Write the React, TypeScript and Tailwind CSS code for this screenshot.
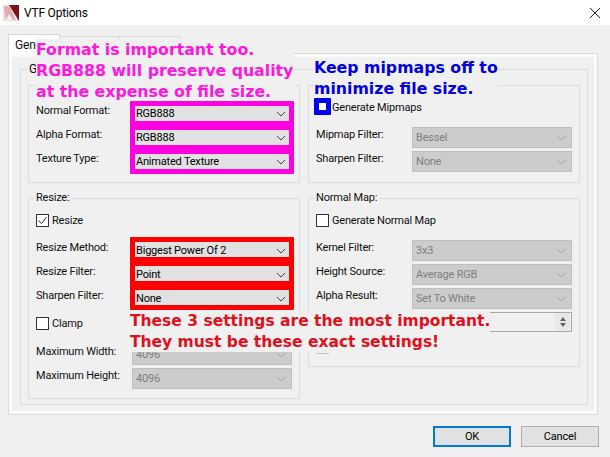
import type { ReactNode } from "react";

const ui = "[font-family:'Roboto','Noto_Sans',sans-serif]";
const note = "[font-family:'DejaVu_Sans',sans-serif] font-bold leading-[21px] bg-[#f0f0f0]";

function Chevron({ off }: { off?: boolean }) {
  return (
    <svg viewBox="0 0 10 6" className="h-[6px] w-[10px]" fill="none">
      <path d="M1 1l4 4 4-4" stroke={off ? "#a3a3a3" : "#444"} strokeWidth="1" />
    </svg>
  );
}

function Select({ value, off }: { value: string; off?: boolean }) {
  return (
    <div
      className={
        "flex h-[21px] w-[160px] shrink-0 items-center justify-between pl-[3px] pr-[5px] border " +
        (off ? "bg-[#cccccc] border-[#bfbfbf] text-[#808080]" : "bg-[#e1e1e1] border-[#adadad] text-black")
      }
    >
      <span className="pt-px">{value}</span>
      <Chevron off={off} />
    </div>
  );
}

function Row({ label, value, off }: { label: string; value: string; off?: boolean }) {
  return (
    <div className="flex h-[21px] items-center justify-between pl-[7px] pr-[7px]">
      <span className="-mt-[5px] whitespace-nowrap">{label}</span>
      <Select value={value} off={off} />
    </div>
  );
}

function Check({ label, checked }: { label: string; checked?: boolean }) {
  return (
    <div className="flex h-[13px] items-center gap-[3px] pl-[7px]">
      <span className="flex h-[13px] w-[13px] items-center justify-center border border-[#333333] bg-white">
        {checked && (
          <svg viewBox="0 0 11 11" className="h-[11px] w-[11px]" fill="none">
            <path d="M1.5 5.5l3 3 5-6.5" stroke="#333" strokeWidth="1" />
          </svg>
        )}
      </span>
      <span className="whitespace-nowrap pt-px">{label}</span>
    </div>
  );
}

function Group({ title, className, children }: { title: string; className?: string; children: ReactNode }) {
  return (
    <div className={"relative w-[272px] border border-[#dcdcdc] " + (className ?? "")}>
      {title && <span className="absolute -top-[9px] left-[5px] bg-[#f0f0f0] px-[2px] leading-[16px]">{title}</span>}
      {children}
    </div>
  );
}

function AppIcon() {
  return (
    <svg viewBox="0 0 16 16" className="h-4 w-4">
      <rect width="16" height="16" fill="#e9dede" />
      <path d="M6 0h10v16L11 8z" fill="#7d1414" />
      <path d="M1 2l5-1 4 8 2 6H3z" fill="#e4a7b4" />
      <path d="M3 15l3-6 4 6z" fill="#f3f0f0" />
    </svg>
  );
}

export default function App() {
  return (
    <div className={"relative flex h-[457px] w-[610px] flex-col overflow-hidden bg-[#f0f0f0] text-[11px] tracking-[-0.2px] text-[#111111] " + ui}>
      {/* Title bar */}
      <div className="flex h-[25px] shrink-0 items-center bg-white pl-[3px] pr-[10px]">
        <AppIcon />
        <span className="ml-[5px] text-[12px] text-black">VTF Options</span>
        <svg viewBox="0 0 10 10" className="ml-auto h-[10px] w-[10px]" fill="none">
          <path d="M0 0l10 10M10 0L0 10" stroke="#222" strokeWidth="1" />
        </svg>
      </div>

      {/* Tabs */}
      <div className="relative z-10 ml-[8px] mt-[9px] flex h-[20px] items-end">
        <div className="h-[21px] w-[52px] self-start border border-b-0 border-[#d9d9d9] bg-white pl-[6px] pt-[2px] text-[12px] leading-[16px]">General</div>
        <div className="h-[18px] w-[60px] border border-l-0 border-b-0 border-[#d9d9d9]" />
        <div className="h-[18px] w-[61px] border border-l-0 border-b-0 border-[#d9d9d9]" />
      </div>

      {/* Tab page */}
      <div className="mx-[8px] h-[362px] w-[590px] -mt-px border border-[#d9d9d9] bg-[#f0f0f0] shadow-[inset_0_0_0_3px_#fbfbfb]">
        <div className="relative mx-[11px] mt-[15px] h-[336px] w-[568px] border border-[#dcdcdc] px-[7px] pt-[15px]">
          <span className="absolute -top-[9px] left-[6px] bg-[#f0f0f0] px-[2px] text-[12px] leading-[16px]">General</span>
          <div className="grid grid-cols-[272px_272px] gap-x-[8px]">
            <div className="flex flex-col gap-[15px]">
              <Group title="" className="h-[98px]">
                <div className="mt-[17px] flex flex-col gap-[3px]">
                  <Row label="Normal Format:" value="RGB888" />
                  <Row label="Alpha Format:" value="RGB888" />
                  <Row label="Texture Type:" value="Animated Texture" />
                </div>
              </Group>
              <Group title="Resize:" className="h-[201px]">
                <div className="mt-[15px]"><Check label="Resize" checked /></div>
                <div className="mt-[13px] flex flex-col gap-[3px]">
                  <Row label="Resize Method:" value="Biggest Power Of 2" />
                  <Row label="Resize Filter:" value="Point" />
                  <Row label="Sharpen Filter:" value="None" />
                </div>
                <div className="mt-[8px]"><Check label="Clamp" /></div>
                <div className="mt-[14px] flex flex-col gap-[3px]">
                  <Row label="Maximum Width:" value="4096" off />
                  <Row label="Maximum Height:" value="4096" off />
                </div>
              </Group>
            </div>
            <div className="flex flex-col gap-[15px]">
              <Group title="" className="h-[98px]">
                <div className="mt-[15px]"><Check label="Generate Mipmaps" /></div>
                <div className="mt-[13px] flex flex-col gap-[3px]">
                  <Row label="Mipmap Filter:" value="Bessel" off />
                  <Row label="Sharpen Filter:" value="None" off />
                </div>
              </Group>
              <Group title="Normal Map:" className="h-[169px]">
                <div className="mt-[15px]"><Check label="Generate Normal Map" /></div>
                <div className="mt-[13px] flex flex-col gap-[3px]">
                  <Row label="Kernel Filter:" value="3x3" off />
                  <Row label="Height Source:" value="Average RGB" off />
                  <Row label="Alpha Result:" value="Set To White" off />
                </div>
                <div className="ml-auto mr-[7px] mt-[3px] flex h-[20px] w-[160px] items-center justify-end border border-[#a8a8a8] pr-px">
                  <div className="flex h-[18px] w-[15px] flex-col items-center justify-center gap-[2px] bg-[#e8e8e8]">
                    <span className="h-0 w-0 border-x-[3px] border-b-[4px] border-x-transparent border-b-[#666]" />
                    <span className="h-0 w-0 border-x-[3px] border-t-[4px] border-x-transparent border-t-[#666]" />
                  </div>
                </div>
                {/* top edge of a checkbox left showing under the red note */}
                <span className="absolute left-[7px] top-[154px] h-px w-[13px] bg-[#c4c4c4]" />
              </Group>
            </div>
          </div>
        </div>
      </div>

      {/* Buttons */}
      <div className="mr-[11px] mt-[11px] flex justify-end gap-[10px]">
        <button className="h-[21px] w-[78px] border-2 border-[#0078d7] bg-[#e1e1e1] leading-none text-black">OK</button>
        <button className="h-[21px] w-[78px] border border-[#adadad] bg-[#e1e1e1] leading-none text-black">Cancel</button>
      </div>

      {/* Annotations pasted over the dialog */}
      <div className={"absolute z-20 left-[36px] top-[39px] w-[258px] text-[15.75px] tracking-normal text-[#ff17e0] whitespace-pre " + note}>
        {"Format is important too.\nRGB888 will preserve quality\nat the expense of file size."}
      </div>
      <div className={"absolute z-20 left-[314px] top-[57px] text-[15.75px] tracking-normal text-[#0000e0] whitespace-pre " + note}>
        {"Keep mipmaps off to\nminimize file size."}
      </div>
      <div className={"absolute z-20 left-[130px] top-[311px] h-[41px] text-[15.5px] tracking-normal text-[#e0101c] whitespace-pre " + note}>
        {"These 3 settings are the most important.\nThey must be these exact settings!"}
      </div>
      <div className="absolute z-20 left-[130px] top-[101px] h-[25px] w-[164px] rounded-[1px] border-[5px] border-[#ff00e0]" />
      <div className="absolute z-20 left-[130px] top-[125px] h-[25px] w-[164px] rounded-[1px] border-[5px] border-[#ff00e0]" />
      <div className="absolute z-20 left-[130px] top-[149px] h-[25px] w-[164px] rounded-[1px] border-[5px] border-[#ff00e0]" />
      <div className="absolute z-20 left-[130px] top-[237px] h-[25px] w-[164px] rounded-[1px] border-[5px] border-[#ff0000]" />
      <div className="absolute z-20 left-[130px] top-[261px] h-[25px] w-[164px] rounded-[1px] border-[5px] border-[#ff0000]" />
      <div className="absolute z-20 left-[130px] top-[285px] h-[25px] w-[164px] rounded-[1px] border-[5px] border-[#ff0000]" />
      <div className="absolute z-20 left-[314px] top-[98px] h-[17px] w-[17px] rounded-[1px] border-[5px] border-[#0000f0] bg-white" />
    </div>
  );
}
